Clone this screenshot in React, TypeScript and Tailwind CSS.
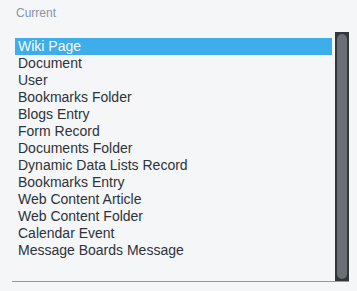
const items = [
  'Wiki Page',
  'Document',
  'User',
  'Bookmarks Folder',
  'Blogs Entry',
  'Form Record',
  'Documents Folder',
  'Dynamic Data Lists Record',
  'Bookmarks Entry',
  'Web Content Article',
  'Web Content Folder',
  'Calendar Event',
  'Message Boards Message',
];

export default function App() {
  return (
    <div className="h-[291px] w-full bg-[#f5f6f8] font-['Liberation_Sans',Arial,sans-serif]">
      <div className="pl-[16px] pt-[5px] text-[12px] leading-[16px] text-[#8797aa]">Current</div>
      <div className="ml-[12px] mt-[11px] flex h-[250px] w-[337px] border-b border-[#8c9bab]">
        <div className="flex-1 pl-[3px] pr-[3px] pt-[6px]">
          {items.map((item, i) => (
            <div
              key={item}
              className={
                i === 0
                  ? 'h-[17px] bg-[#3daee9] pl-[3px] text-[14px] leading-[17px] text-[#f5f8fb]'
                  : 'h-[17px] pl-[3px] text-[14px] leading-[17px] text-[#2d3338]'
              }
            >
              {item}
            </div>
          ))}
        </div>
        <div className="flex w-[14px] bg-[#31363b] px-[2px] pb-[2px] pt-[2px]">
          <div className="flex-1 rounded-[5px] bg-[#6b6e74]" />
        </div>
      </div>
    </div>
  );
}
